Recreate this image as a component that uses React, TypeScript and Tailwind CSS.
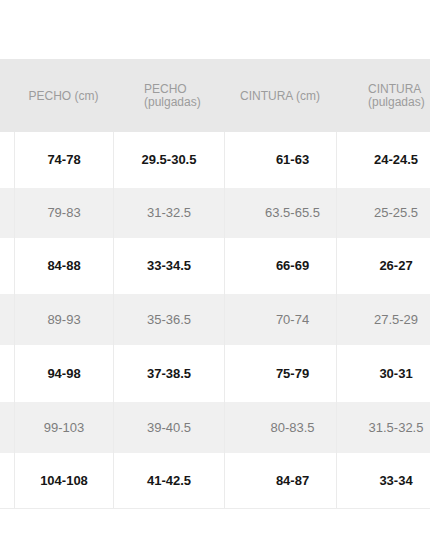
const rows = [
  { h: 'h-[56px]', shade: false, cells: ['74-78', '29.5-30.5', '61-63', '24-24.5'] },
  { h: 'h-[50px]', shade: true, cells: ['79-83', '31-32.5', '63.5-65.5', '25-25.5'] },
  { h: 'h-[56px]', shade: false, cells: ['84-88', '33-34.5', '66-69', '26-27'] },
  { h: 'h-[51px]', shade: true, cells: ['89-93', '35-36.5', '70-74', '27.5-29'] },
  { h: 'h-[57px]', shade: false, cells: ['94-98', '37-38.5', '75-79', '30-31'] },
  { h: 'h-[51px]', shade: true, cells: ['99-103', '39-40.5', '80-83.5', '31.5-32.5'] },
  { h: 'h-[55px]', shade: false, cells: ['104-108', '41-42.5', '84-87', '33-34'] },
]

// column offsets: the cm waist / inch columns sit a bit right of center in the source chart
const cellPad = ['', '', 'pl-[24px]', 'pl-[7px]']

export default function App() {
  return (
    <div className="h-[537px] w-[430px] overflow-hidden bg-white font-['Liberation_Sans',Arial,sans-serif]">
      <div className="h-[59px]" />
      <div className="grid h-[73px] grid-cols-[14px_99px_111px_112px_112px] bg-[#e8e8e8] text-[12px] text-[#9c9c9c]">
        <div />
        <div className="flex items-center justify-center">PECHO (cm)</div>
        <div className="flex items-center pl-[31px] leading-[13px]">
          <span>
            PECHO
            <br />
            (pulgadas)
          </span>
        </div>
        <div className="flex items-center justify-center">CINTURA (cm)</div>
        <div className="flex items-center pl-[32px] leading-[13px]">
          <span>
            CINTURA
            <br />
            (pulgadas)
          </span>
        </div>
      </div>
      <div className="border-b border-[#ececec]">
        {rows.map((r, i) => (
          <div
            key={i}
            className={`grid grid-cols-[14px_99px_111px_112px_112px] text-[13px] ${r.h} ${
              r.shade ? 'bg-[#f0f0f0] font-normal text-[#7d7d7d]' : 'bg-white font-bold text-[#161616]'
            }`}
          >
            <div />
            {r.cells.map((c, j) => (
              <div
                key={j}
                className={`flex items-center justify-center border-l border-[#ebebeb] ${cellPad[j]}`}
              >
                {c}
              </div>
            ))}
          </div>
        ))}
      </div>
    </div>
  )
}
